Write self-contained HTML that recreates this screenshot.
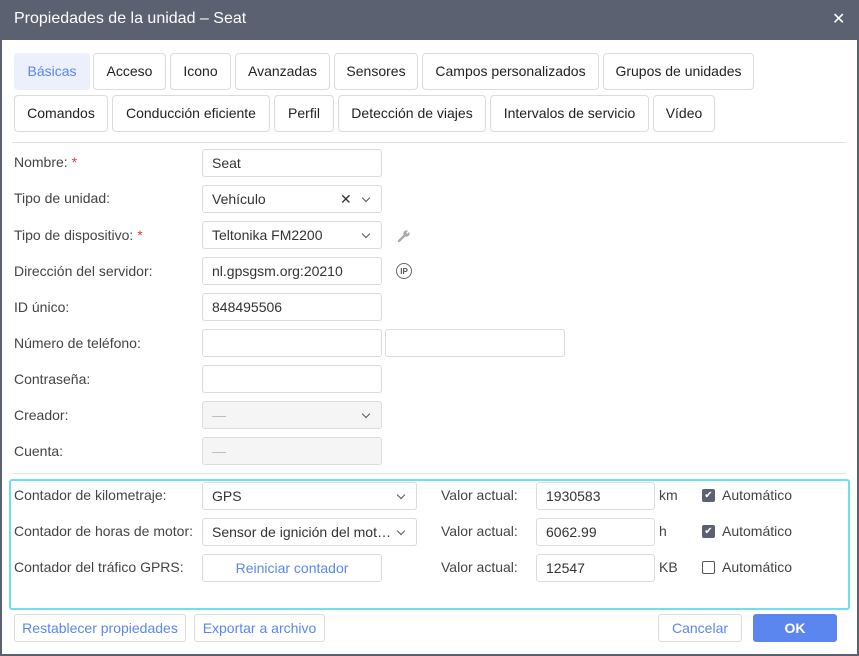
<!DOCTYPE html>
<html><head><meta charset="utf-8"><style>
*{box-sizing:border-box;margin:0;padding:0}
body{width:859px;height:656px;background:#5b6170;font-family:"Liberation Sans",sans-serif;font-size:14px;color:#333;position:relative;overflow:hidden}
.win{position:absolute;left:2px;top:40px;width:855px;height:614px;background:#fff}
.title{position:absolute;left:14px;top:10px;color:#fff;font-size:16px}
.close{position:absolute;left:832px;top:9px;color:#fff;font-size:16px}
.a{position:absolute}
.tab{position:absolute;height:37px;border:1px solid #dcdcdc;border-radius:4px;display:flex;align-items:center;justify-content:center;font-size:14px;color:#222;padding-bottom:2px}
.lbl{position:absolute;left:14px;color:#444}
.in{position:absolute;height:28px;border:1px solid #dcdcdc;border-radius:3px;padding-left:9px;display:flex;align-items:center;color:#333;background:#fff;padding-bottom:1px}
.dis{background:#f5f5f5;color:#bbb}
.chev{position:absolute;right:12px;top:9px;width:6px;height:6px;border-right:1.5px solid #555;border-bottom:1.5px solid #555;transform:rotate(45deg)}
.btn{position:absolute;height:28px;border:1px solid #dcdcdc;border-radius:3px;display:flex;align-items:center;justify-content:center;color:#5b86f0;background:#fff;padding-bottom:1px}
.cb{position:absolute;width:13px;height:13px;border-radius:2px}
.hr{position:absolute;left:12px;width:834px;height:1px;background:#e2e2e2}
</style></head><body>
<div class="title">Propiedades de la unidad – Seat</div>
<div class="close">✕</div>
<div class="win"></div>
<div class="tab" style="left:14px;top:53px;width:76px;background:#ebf0fc;border-color:#ebf0fc;color:#5b86f0">Básicas</div>
<div class="tab" style="left:93px;top:53px;width:73px">Acceso</div>
<div class="tab" style="left:170px;top:53px;width:61px">Icono</div>
<div class="tab" style="left:235px;top:53px;width:95px">Avanzadas</div>
<div class="tab" style="left:334px;top:53px;width:84px">Sensores</div>
<div class="tab" style="left:422px;top:53px;width:177px">Campos personalizados</div>
<div class="tab" style="left:603px;top:53px;width:151px">Grupos de unidades</div>
<div class="tab" style="left:14px;top:95px;width:94px">Comandos</div>
<div class="tab" style="left:112px;top:95px;width:158px">Conducción eficiente</div>
<div class="tab" style="left:274px;top:95px;width:60px">Perfil</div>
<div class="tab" style="left:338px;top:95px;width:148px">Detección de viajes</div>
<div class="tab" style="left:490px;top:95px;width:159px">Intervalos de servicio</div>
<div class="tab" style="left:653px;top:95px;width:62px">Vídeo</div>
<div class="hr" style="top:142px"></div>

<div class="lbl" style="top:154px">Nombre: <span style="color:#e53935">*</span></div>
<div class="in" style="left:202px;top:149px;width:180px">Seat</div>
<div class="lbl" style="top:190px">Tipo de unidad:</div>
<div class="in" style="left:202px;top:185px;width:180px">Vehículo<span class="a" style="left:137px;top:5px;font-size:14px">✕</span><span class="chev"></span></div>
<div class="lbl" style="top:227px">Tipo de dispositivo: <span style="color:#e53935">*</span></div>
<div class="in" style="left:202px;top:221px;width:180px">Teltonika FM2200<span class="chev"></span></div>
<svg class="a" style="left:397px;top:229px" width="14" height="14" viewBox="0 0 14 14"><path d="M2 12 L7.5 6.5" stroke="#aaa" stroke-width="2.4" stroke-linecap="round"/><path d="M6.5 5.5 A3 3 0 0 1 11 2 L9.2 3.8 L10.2 4.8 L12 3 A3 3 0 0 1 8.5 7.5 Z" fill="#aaa"/></svg>
<div class="lbl" style="top:263px">Dirección del servidor:</div>
<div class="in" style="left:202px;top:257px;width:180px">nl.gpsgsm.org:20210</div>
<div class="a" style="left:396px;top:263px;width:16px;height:16px;border:1.5px solid #666;border-radius:50%;font-size:8px;font-weight:bold;color:#555;display:flex;align-items:center;justify-content:center">IP</div>
<div class="lbl" style="top:299px">ID único:</div>
<div class="in" style="left:202px;top:293px;width:180px">848495506</div>
<div class="lbl" style="top:335px">Número de teléfono:</div>
<div class="in" style="left:202px;top:329px;width:180px"></div>
<div class="in" style="left:385px;top:329px;width:180px"></div>
<div class="lbl" style="top:371px">Contraseña:</div>
<div class="in" style="left:202px;top:365px;width:180px"></div>
<div class="lbl" style="top:407px">Creador:</div>
<div class="in dis" style="left:202px;top:401px;width:180px">—<span class="chev"></span></div>
<div class="lbl" style="top:443px">Cuenta:</div>
<div class="in dis" style="left:202px;top:437px;width:180px">—</div>
<div class="hr" style="top:473px"></div>

<div class="a" style="left:9px;top:479px;width:841px;height:131px;border:2px solid #6fdfef;border-radius:3px"></div>
<div class="lbl" style="top:487px">Contador de kilometraje:</div>
<div class="in" style="left:202px;top:482px;width:215px">GPS<span class="chev"></span></div>
<div class="lbl" style="top:523px">Contador de horas de motor:</div>
<div class="in" style="left:202px;top:518px;width:215px">Sensor de ignición del mot…<span class="chev"></span></div>
<div class="lbl" style="top:559px">Contador del tráfico GPRS:</div>
<div class="btn" style="left:202px;top:554px;width:180px">Reiniciar contador</div>

<div class="a" style="left:441px;top:487px;color:#444">Valor actual:</div>
<div class="in" style="left:536px;top:482px;width:119px">1930583</div>
<div class="a" style="left:659px;top:487px;color:#444">km</div>
<div class="cb" style="left:702px;top:489px;background:#5b6170;color:#fff;font-size:10px;text-align:center;line-height:13px">✔</div>
<div class="a" style="left:722px;top:487px;color:#444">Automático</div>

<div class="a" style="left:441px;top:523px;color:#444">Valor actual:</div>
<div class="in" style="left:536px;top:518px;width:119px">6062.99</div>
<div class="a" style="left:659px;top:523px;color:#444">h</div>
<div class="cb" style="left:702px;top:525px;background:#5b6170;color:#fff;font-size:10px;text-align:center;line-height:13px">✔</div>
<div class="a" style="left:722px;top:523px;color:#444">Automático</div>

<div class="a" style="left:441px;top:559px;color:#444">Valor actual:</div>
<div class="in" style="left:536px;top:554px;width:119px">12547</div>
<div class="a" style="left:659px;top:559px;color:#444">KB</div>
<div class="cb" style="left:702px;top:561px;border:1px solid #555"></div>
<div class="a" style="left:722px;top:559px;color:#444">Automático</div>

<div class="btn" style="left:14px;top:614px;width:172px">Restablecer propiedades</div>
<div class="btn" style="left:194px;top:614px;width:131px">Exportar a archivo</div>
<div class="btn" style="left:658px;top:614px;width:84px">Cancelar</div>
<div class="btn" style="left:753px;top:614px;width:84px;background:#5b86f0;border-color:#5b86f0;color:#fff;font-weight:bold">OK</div>
</body></html>
